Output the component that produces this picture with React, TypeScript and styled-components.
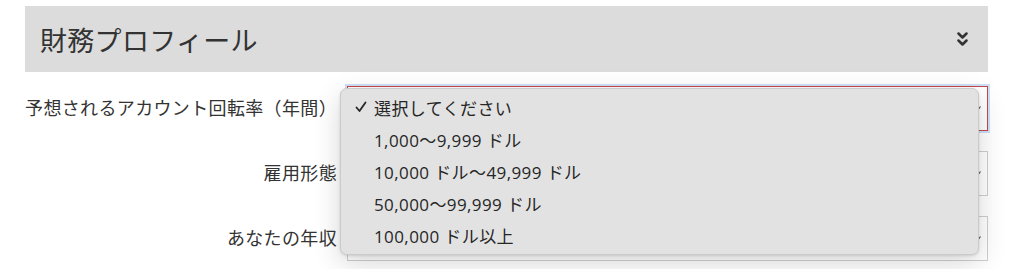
import React from "react";
import styled, { createGlobalStyle } from "styled-components";

const GlobalStyle = createGlobalStyle`
  html, body {
    margin: 0;
    padding: 0;
    background: #ffffff;
    font-family: "Open Sans", "Noto Sans CJK JP", sans-serif;
    color: #333333;
  }
`;

const Page = styled.div`
  width: 1024px;
  height: 269px;
  padding: 6px 36px 0 25px;
  box-sizing: border-box;
  overflow: hidden;
`;

const PanelHeader = styled.div`
  height: 66px;
  background: #dcdcdc;
  display: flex;
  align-items: center;
  justify-content: space-between;
  padding: 0 20px 0 15px;
  box-sizing: border-box;
`;

const Title = styled.h2`
  margin: 0;
  font-family: "Noto Sans CJK JP", sans-serif;
  font-size: 27px;
  font-weight: 400;
  color: #333333;
  letter-spacing: 0.3px;
`;

const Form = styled.div`
  display: grid;
  grid-template-columns: 312px 641px;
  column-gap: 10px;
  row-gap: 20px;
  padding-top: 14px;
`;

const Label = styled.label`
  display: flex;
  align-items: center;
  justify-content: flex-end;
  font-family: "Noto Sans CJK JP", sans-serif;
  font-size: 18px;
  letter-spacing: 0.35px;
  color: #333333;
  white-space: nowrap;
  padding-bottom: 4px;
`;

const SelectBox = styled.div<{ $focused?: boolean }>`
  position: relative;
  height: 45px;
  box-sizing: border-box;
  background: #ffffff;
  border: 1px solid ${(p) => (p.$focused ? "#c5474b" : "#cfcfcf")};
  box-shadow: ${(p) => (p.$focused ? "0 0 0 2px #cde0f6" : "none")};
  display: flex;
  align-items: center;
  justify-content: flex-end;
  padding-right: 6px;
`;

const Arrow = styled.svg`
  width: 4px;
  height: 5px;
`;

const Menu = styled.ul`
  position: absolute;
  left: -8px;
  top: 1px;
  width: 639px;
  height: 167px;
  margin: 0;
  padding: 2px 0 5px;
  box-sizing: border-box;
  list-style: none;
  background: #e2e2e2;
  border: 1px solid #cbcbcb;
  border-radius: 7px;
  box-shadow: 0 8px 28px rgba(0, 0, 0, 0.16), 0 1px 3px rgba(0, 0, 0, 0.12);
  z-index: 2;
`;

const Option = styled.li`
  height: 32px;
  display: flex;
  align-items: center;
  font-size: 17px;
  letter-spacing: 0.4px;
  color: #262626;
  padding-left: 14px;
  white-space: pre;
`;

const CheckSlot = styled.span`
  width: 19px;
  height: 14px;
  display: flex;
  align-items: center;
`;

const CheckIcon = () => (
  <svg width="12" height="12" viewBox="0 0 12 12">
    <path
      d="M1.5 6.5 L4.5 10 L10.5 1.5"
      fill="none"
      stroke="#262626"
      strokeWidth="1.8"
      strokeLinecap="round"
      strokeLinejoin="round"
    />
  </svg>
);

const ChevronIcon = () => (
  <svg width="11" height="17" viewBox="0 0 11 17">
    <path
      d="M1.5 2.5 L5.5 6.5 L9.5 2.5 M1.5 9.5 L5.5 13.5 L9.5 9.5"
      fill="none"
      stroke="#333"
      strokeWidth="2.5"
      strokeLinecap="round"
      strokeLinejoin="round"
    />
  </svg>
);

const SmallArrow = () => (
  <Arrow viewBox="0 0 4 5">
    <path d="M0.5 4.5 L3.5 0.5" stroke="#555" strokeWidth="1.2" />
  </Arrow>
);

const options = [
  "選択してください",
  "1,000～9,999 ドル",
  "10,000 ドル～49,999 ドル",
  "50,000～99,999 ドル",
  "100,000 ドル以上",
];

export default function App() {
  return (
    <>
      <GlobalStyle />
      <Page>
        <PanelHeader>
          <Title>財務プロフィール</Title>
          <ChevronIcon />
        </PanelHeader>
        <Form>
          <Label>予想されるアカウント回転率（年間）</Label>
          <SelectBox $focused>
            <SmallArrow />
            <Menu>
              {options.map((o, i) => (
                <Option key={o}>
                  <CheckSlot>{i === 0 && <CheckIcon />}</CheckSlot>
                  {o}
                </Option>
              ))}
            </Menu>
          </SelectBox>
          <Label>雇用形態</Label>
          <SelectBox>
            <SmallArrow />
          </SelectBox>
          <Label>あなたの年収</Label>
          <SelectBox>
            <SmallArrow />
          </SelectBox>
        </Form>
      </Page>
    </>
  );
}
